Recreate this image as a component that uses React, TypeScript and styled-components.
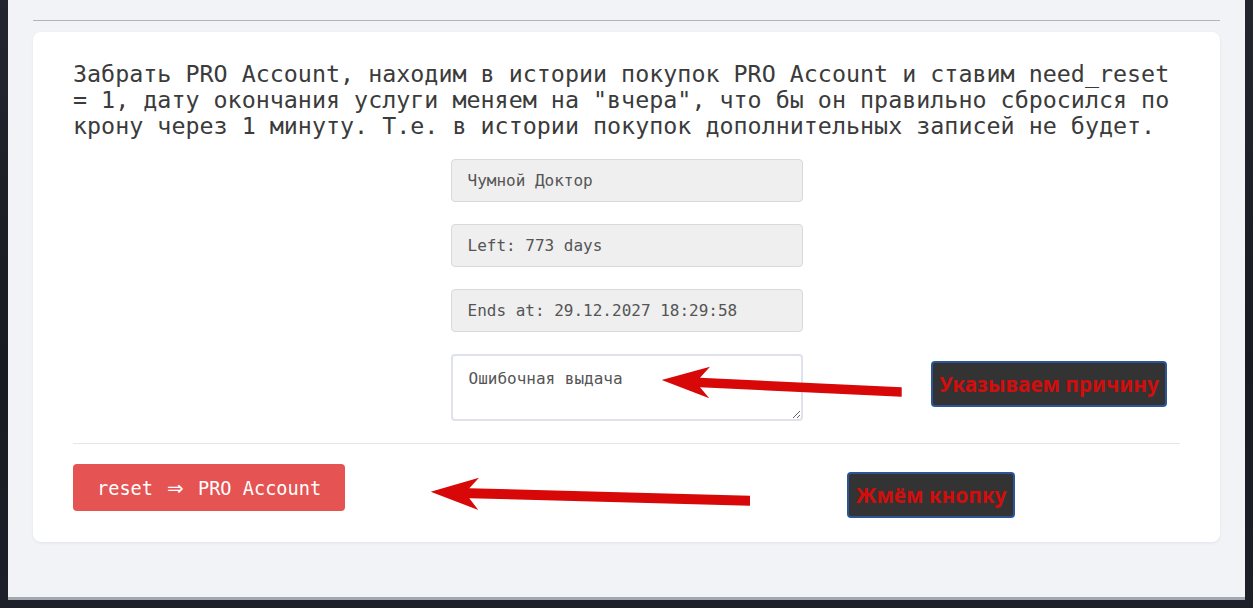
import React from "react";
import styled, { createGlobalStyle } from "styled-components";

const GlobalStyle = createGlobalStyle`
  html, body {
    margin: 0;
    padding: 0;
    background: #1b1e25;
  }
  * {
    box-sizing: border-box;
  }
`;

const Screen = styled.div`
  position: relative;
  width: 1253px;
  height: 608px;
  overflow: hidden;
  background: linear-gradient(180deg, #23262e 0%, #181b22 60%, #1d2028 100%);
`;

const Panel = styled.div`
  margin-left: 8px;
  width: 1237px;
  height: 600px;
  padding: 20px 25px 0;
  background: #f1f3f7;
  border-bottom: 3px solid #a2a6ae;
`;

const TopRule = styled.hr`
  margin: 0 0 11px;
  border: 0;
  border-top: 1px solid #b4b4b6;
`;

const Card = styled.div`
  background: #ffffff;
  border-radius: 8px;
  box-shadow: 0 1px 3px rgba(40, 50, 80, 0.08);
  padding: 29px 40px 31px;
`;

const Intro = styled.p`
  margin: 0 0 20px;
  font-family: "DejaVu Sans Mono", "Liberation Mono", monospace;
  font-size: 23.35px;
  line-height: 26px;
  color: #3b3b3b;
`;

const Form = styled.div`
  display: flex;
  flex-direction: column;
  align-items: center;
  gap: 22px;
`;

const Field = styled.div`
  width: 352px;
  height: 43px;
  display: flex;
  align-items: center;
  padding: 0 16px;
  background: #efefef;
  border: 1px solid #d9d9d9;
  border-radius: 4px;
  font-family: "DejaVu Sans Mono", "Liberation Mono", monospace;
  font-size: 16px;
  color: #555555;
`;

const Reason = styled.textarea`
  display: block;
  width: 352px;
  height: 67px;
  padding: 13px 16px;
  margin: 0;
  background: #ffffff;
  border: 2px solid #dfe2ec;
  border-radius: 4px;
  font-family: "DejaVu Sans Mono", "Liberation Mono", monospace;
  font-size: 16px;
  line-height: 20px;
  color: #555555;
  outline: none;
`;

const Divider = styled.hr`
  margin: 22px 0 20px;
  border: 0;
  border-top: 1px solid #e6e6e6;
`;

const DangerButton = styled.button`
  height: 47px;
  padding: 0 24px;
  border: 0;
  border-radius: 4px;
  background: #e55353;
  color: #ffffff;
  font-family: "DejaVu Sans Mono", "Liberation Mono", monospace;
  font-size: 18.6px;
  cursor: pointer;
`;

const Implies = styled.span`
  display: inline-block;
  width: 22.6px;
  text-align: center;
  font-family: "DejaVu Sans", sans-serif;
  font-size: 20px;
`;

const Note = styled.div<{ $x: number; $y: number; $w: number }>`
  position: absolute;
  left: ${(p) => p.$x}px;
  top: ${(p) => p.$y}px;
  width: ${(p) => p.$w}px;
  height: 46px;
  display: flex;
  align-items: center;
  justify-content: center;
  background: #333333;
  border: 2px solid #2c5597;
  border-radius: 4px;
  color: #d20d0d;
  font-family: "Noto Sans", "DejaVu Sans", sans-serif;
  font-weight: bold;
  font-size: 20.8px;
  white-space: nowrap;
`;

const Arrows = styled.svg`
  position: absolute;
  left: 0;
  top: 0;
  pointer-events: none;
`;

const arrows = [
  "M661.7 380 L710 366.7 L700 377.7 L901.7 387.3 L901.7 396.7 L700 387.3 L709.3 398.3 Z",
  "M430.7 491.7 L479 477.7 L469.3 488.3 L750 495.7 L750 505.7 L469.3 498.3 L478.3 510 Z",
];

const App = () => {
  return (
    <Screen>
      <GlobalStyle />
      <Panel>
        <TopRule />
        <Card>
          <Intro>
            Забрать PRO Account, находим в истории покупок PRO Account и ставим
            need_reset = 1, дату окончания услуги меняем на "вчера", что бы он
            правильно сбросился по крону через 1 минуту. Т.е. в истории покупок
            дополнительных записей не будет.
          </Intro>
          <Form>
            <Field>Чумной Доктор</Field>
            <Field>Left: 773 days</Field>
            <Field>Ends at: 29.12.2027 18:29:58</Field>
            <Reason defaultValue="Ошибочная выдача" />
          </Form>
          <Divider />
          <DangerButton>
            reset <Implies>⇒</Implies> PRO Account
          </DangerButton>
        </Card>
      </Panel>
      <Arrows width="1253" height="608" viewBox="0 0 1253 608">
        {arrows.map((d) => (
          <path key={d} d={d} fill="#d80808" />
        ))}
      </Arrows>
      <Note $x={931} $y={361} $w={236}>
        Указываем причину
      </Note>
      <Note $x={847} $y={472} $w={168}>
        Жмём кнопку
      </Note>
    </Screen>
  );
};

export default App;
